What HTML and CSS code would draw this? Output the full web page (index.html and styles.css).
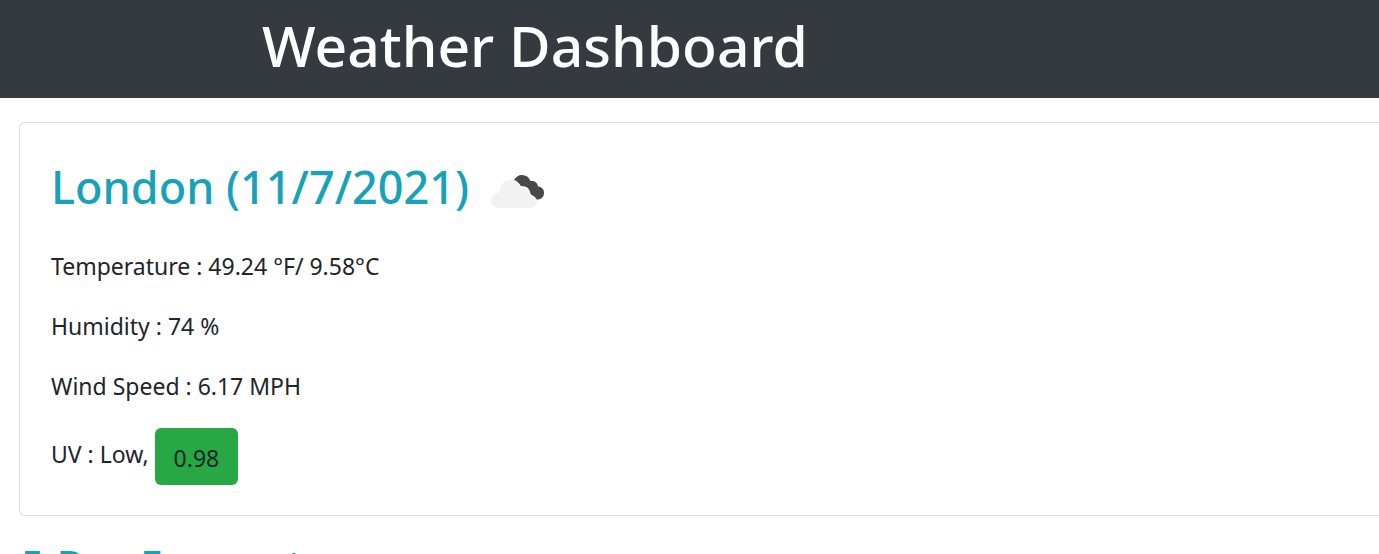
FILE: index.html
```html
<!DOCTYPE html>
<html lang="en">
<head>
<meta charset="utf-8">
<title>Weather Dashboard</title>
<link rel="stylesheet" href="styles.css">
</head>
<body>
<header class="banner"><h1 class="banner-title">Weather Dashboard</h1></header>
<main class="content">
  <section class="card">
    <div class="card-head">
      <h2 class="city">London (11/7/2021)</h2>
      <svg class="icon" viewBox="0 0 54 34" role="img" aria-label="Broken clouds">
        <path fill="#484848" d="M23 5C25 2 27 0 31 0c4 0 7 2 8.500 6 4-.5 7 1.500 7.500 5.500C51 12 53 14.500 53 18c0 4-3 6.500-6.500 6.500C43 24.500 40 22.500 38 20L37 13 28 11Z"/>
        <path fill="#fff" d="M23 5c4 1.500 6 4 7 6.500 5-1 9 2 9.500 7.500l4 3-5 2-14-10Z"/>
        <path fill="#f2f2f2" d="M8 33C3.500 33 0 30 0 25.500S3.500 18 8.500 17.500C9 10 13 5 19 5c4 0 7.500 2.500 9.500 7.500 5-1 9.500 2 9.500 7.500 5 0 8 3 8 6.500S43 33 39 33Z"/>
      </svg>
    </div>
    <p class="reading">Temperature : 49.24 °F/ 9.58°C</p>
    <p class="reading">Humidity : 74 %</p>
    <p class="reading">Wind Speed : 6.17 MPH</p>
    <div class="uv"><span class="uv-label">UV : Low,</span><span class="uv-value">0.98</span></div>
  </section>
  <h3 class="forecast">5-Day Forecast:</h3>
</main>
</body>
</html>
```
FILE: styles.css
```css
* { box-sizing: border-box; }
body {
  margin: 0;
  height: 100vh;
  overflow: hidden;
  background: #fff;
  color: #212529;
  font-family: "Segoe UI", "Noto Sans", "Open Sans", sans-serif;
  font-size: 23px;
  line-height: 36px;
}
h1, h2, h3, p { margin: 0; }
.banner { background: #343a40; padding: 9px 19% 17px; }
.banner-title { color: #fff; font-size: 57px; line-height: 72px; font-weight: 500; white-space: nowrap; }
.content { padding: 24px 0 0 19px; }
.card {
  border: 1px solid #dfdfdf;
  border-right: 0;
  border-radius: 6px 0 0 6px;
  padding: 28px 31px 30px;
}
.card-head { display: flex; align-items: center; gap: 22px; margin-bottom: 25px; padding: 6px 0; }
.city { color: #17a2b8; font-size: 45px; line-height: 60px; font-weight: 500; white-space: nowrap; }
.icon { width: 54px; height: 34px; margin-top: 9px; }
.reading { margin-bottom: 24px; }
.uv { display: flex; align-items: center; gap: 6px; }
.uv-label { padding-bottom: 6px; }
.uv-value { background: #28a745; border-radius: 6px; padding: 12px 19px 9px; }
.forecast { color: #17a2b8; font-size: 40px; line-height: 50px; font-weight: 500; padding: 24px 2px; }
```
